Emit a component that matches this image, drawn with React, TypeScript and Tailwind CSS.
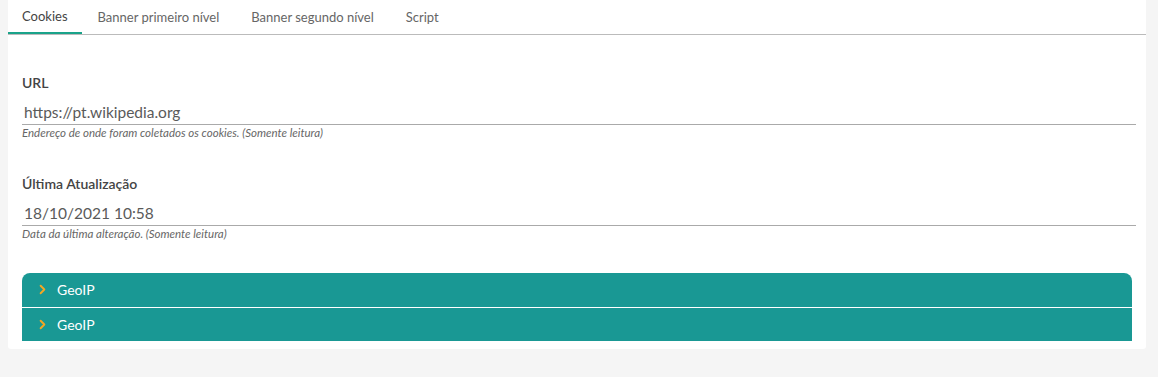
import { ChevronRight } from "lucide-react";

const tabs = ["Cookies", "Banner primeiro nível", "Banner segundo nível", "Script"];

function Field({ label, value, hint }: { label: string; value: string; hint: string }) {
    return (
        <div className="flex flex-col">
            <label className="text-[14px] font-semibold leading-[14px] text-[#444]">{label}</label>
            <div className="mt-[12px] border-b border-[#aaa] pb-[1px] pl-[2px] text-[15.5px] leading-[21px] text-[#5a5a5a]">
                {value}
            </div>
            <span className="text-[11.5px] italic leading-[15px] text-[#666]">{hint}</span>
        </div>
    );
}

export default function App() {
    return (
        <div
            className="min-h-[377px] w-full bg-[#f5f5f5]"
            style={{ fontFamily: '"Lato", "Open Sans", sans-serif' }}
        >
            <div className="mx-[8px] w-[1138px] rounded-b-[3px] bg-white pb-[8px]">
                {/* tabs */}
                <div className="flex h-[35px] border-b border-[#bbb]">
                    {tabs.map((t, i) => (
                        <div
                            key={t}
                            className={
                                i === 0
                                    ? "flex items-center border-b-2 border-[#1aa38a] px-[14px] pt-[2px] text-[13px] text-[#444]"
                                    : "flex items-center px-[16px] pt-[2px] text-[13px] text-[#666]"
                            }
                        >
                            {t}
                        </div>
                    ))}
                </div>

                {/* form */}
                <div className="flex flex-col gap-[37px] pl-[14px] pr-[10px] pt-[41px]">
                    <Field
                        label="URL"
                        value="https://pt.wikipedia.org"
                        hint="Endereço de onde foram coletados os cookies. (Somente leitura)"
                    />
                    <Field
                        label="Última Atualização"
                        value="18/10/2021 10:58"
                        hint="Data da última alteração. (Somente leitura)"
                    />
                </div>

                {/* accordion */}
                <div className="ml-[14px] mr-[14px] mt-[32px] overflow-hidden rounded-t-[8px]">
                    {["GeoIP", "GeoIP"].map((g, i) => (
                        <div
                            key={i}
                            className={
                                "flex h-[34px] items-center gap-[7px] bg-[#199894] pl-[13px] pb-[1px] text-[14px] text-white" +
                                (i > 0 ? " border-t border-white" : "")
                            }
                        >
                            <ChevronRight className="h-[15px] w-[15px] text-[#f5a623]" strokeWidth={3} />
                            {g}
                        </div>
                    ))}
                </div>
            </div>
        </div>
    );
}
